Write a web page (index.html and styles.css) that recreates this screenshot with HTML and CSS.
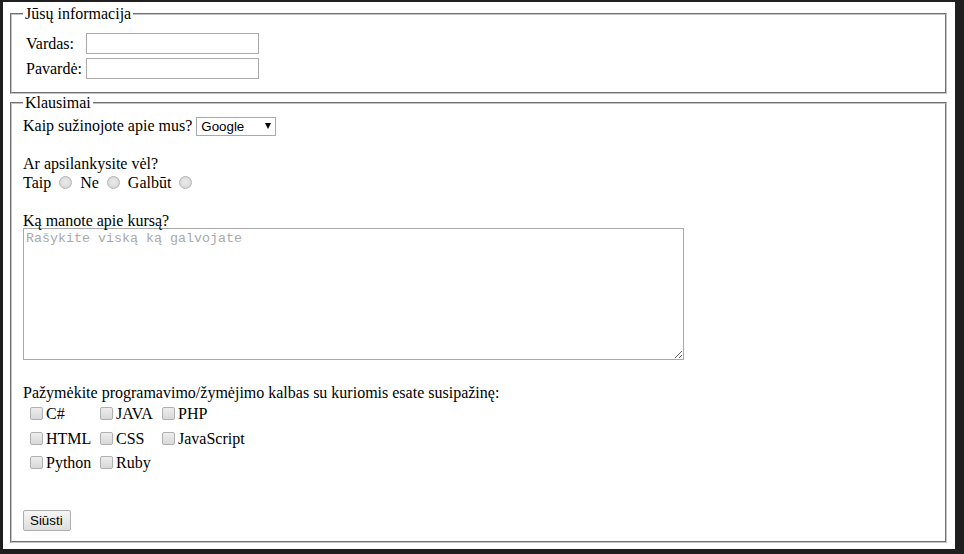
FILE: index.html
```html
<!DOCTYPE html>
<html lang="lt">
<head>
<meta charset="utf-8">
<title>Forma</title>
<link rel="stylesheet" href="styles.css">
</head>
<body>
<div class="window">
  <form class="form">
    <fieldset class="box box-info">
      <legend class="legend">Jūsų informacija</legend>
      <div class="info-grid">
        <label class="info-label" for="vardas">Vardas:</label>
        <input class="text-input" id="vardas" type="text">
        <label class="info-label" for="pavarde">Pavardė:</label>
        <input class="text-input" id="pavarde" type="text">
      </div>
    </fieldset>
    <fieldset class="box box-questions">
      <legend class="legend">Klausimai</legend>
      <div class="line">Kaip sužinojote apie mus? <span class="select-wrap"><select class="select"><option>Google</option><option>Facebook</option><option>Draugai</option></select></span></div>
      <div class="line gap-top">Ar apsilankysite vėl?</div>
      <div class="line">Taip <input class="radio" type="radio" name="vel"> Ne <input class="radio" type="radio" name="vel"> Galbūt <input class="radio" type="radio" name="vel"></div>
      <div class="line gap-top textarea-label">Ką manote apie kursą?</div>
      <textarea class="textarea" placeholder="Rašykite viską ką galvojate"></textarea>
      <div class="line langs-title">Pažymėkite programavimo/žymėjimo kalbas su kuriomis esate susipažinę:</div>
      <div class="langs">
        <label class="lang"><input class="check" type="checkbox">C#</label>
        <label class="lang"><input class="check" type="checkbox">JAVA</label>
        <label class="lang"><input class="check" type="checkbox">PHP</label>
        <label class="lang"><input class="check" type="checkbox">HTML</label>
        <label class="lang"><input class="check" type="checkbox">CSS</label>
        <label class="lang"><input class="check" type="checkbox">JavaScript</label>
        <label class="lang"><input class="check" type="checkbox">Python</label>
        <label class="lang"><input class="check" type="checkbox">Ruby</label>
      </div>
      <div class="actions"><button class="submit" type="submit">Siūsti</button></div>
    </fieldset>
  </form>
</div>
</body>
</html>
```
FILE: styles.css
```css
html {
  background: #1f1f1f;
}
body {
  margin: 0;
  font-family: "Liberation Serif", "Times New Roman", serif;
  font-size: 16px;
  color: #000;
}
.window {
  margin: 2px 9px 0 3px;
  height: 547px;
  box-sizing: border-box;
  background: #fff;
  padding: 3px 6px 0 5px;
  overflow: hidden;
}
.form {
  margin: 0;
}
.box {
  margin: 0 2px;
  padding: 4px 11px 10px 11px;
  border: 2px groove #c4c4c4;
  min-width: 0;
}
.box-info {
  padding-bottom: 13px;
}
.legend {
  padding: 0 2px;
  line-height: 18px;
}
.info-grid {
  display: grid;
  grid-template-columns: auto auto;
  justify-content: start;
  column-gap: 4px;
  row-gap: 4px;
  align-items: center;
  padding: 6px 0 0 3px;
}
.info-label {
  line-height: 18px;
}
.text-input {
  width: 173px;
  height: 21px;
  box-sizing: border-box;
  border: 1px solid #a9a9a9;
  padding: 1px 2px;
  margin: 0;
  font: 13.33px "Liberation Sans", Arial, sans-serif;
}
.line {
  line-height: 19px;
  height: 19px;
}
.gap-top {
  margin-top: 19px;
}
.textarea-label {
  height: 17px;
}
.select-wrap {
  position: relative;
  display: inline-block;
  vertical-align: baseline;
}
.select-wrap::after {
  content: "";
  position: absolute;
  right: 5px;
  top: 7px;
  border-left: 3.5px solid transparent;
  border-right: 3.5px solid transparent;
  border-top: 6px solid #000;
  pointer-events: none;
}
.select {
  appearance: none;
  -webkit-appearance: none;
  width: 80px;
  height: 19px;
  box-sizing: border-box;
  border: 1px solid #a9a9a9;
  border-radius: 0;
  background: #fff;
  padding: 0 0 0 4px;
  margin: 0;
  font: 13.33px "Liberation Sans", Arial, sans-serif;
  color: #000;
}
.radio {
  appearance: none;
  -webkit-appearance: none;
  width: 13px;
  height: 13px;
  box-sizing: border-box;
  border-radius: 50%;
  border: 1px solid #b3b3b3;
  background: radial-gradient(circle at 50% 45%, #ececec 0, #dcdcdc 60%, #cfcfcf 100%);
  margin: 0 4px 0 4px;
  vertical-align: -1px;
}
.textarea {
  display: block;
  width: 661px;
  height: 132px;
  box-sizing: border-box;
  border: 1px solid #a9a9a9;
  padding: 2px;
  margin: 0;
  resize: both;
  font: 13.33px "Liberation Mono", "Courier New", monospace;
}
.textarea::placeholder {
  color: #a9a9a9;
}
.langs-title {
  margin-top: 23px;
}
.langs {
  display: grid;
  grid-template-columns: 70px 62px auto;
  justify-content: start;
  grid-auto-rows: 24.5px;
  padding: 2px 0 0 7px;
}
.lang {
  display: flex;
  align-items: center;
  gap: 3px;
  height: 19px;
  line-height: 19px;
}
.check {
  appearance: none;
  -webkit-appearance: none;
  width: 13px;
  height: 13px;
  box-sizing: border-box;
  border: 1px solid #b0b0b0;
  border-radius: 2px;
  background: linear-gradient(#ededed, #d8d8d8);
  margin: 0;
  flex: none;
}
.actions {
  padding-top: 32px;
}
.submit {
  font: 13.33px "Liberation Sans", Arial, sans-serif;
  height: 21px;
  padding: 0 7px 0 6px;
  border: 1px solid #adadad;
  border-radius: 2px;
  background: linear-gradient(#f6f6f6, #dedede);
  color: #000;
  margin: 0;
}
```
